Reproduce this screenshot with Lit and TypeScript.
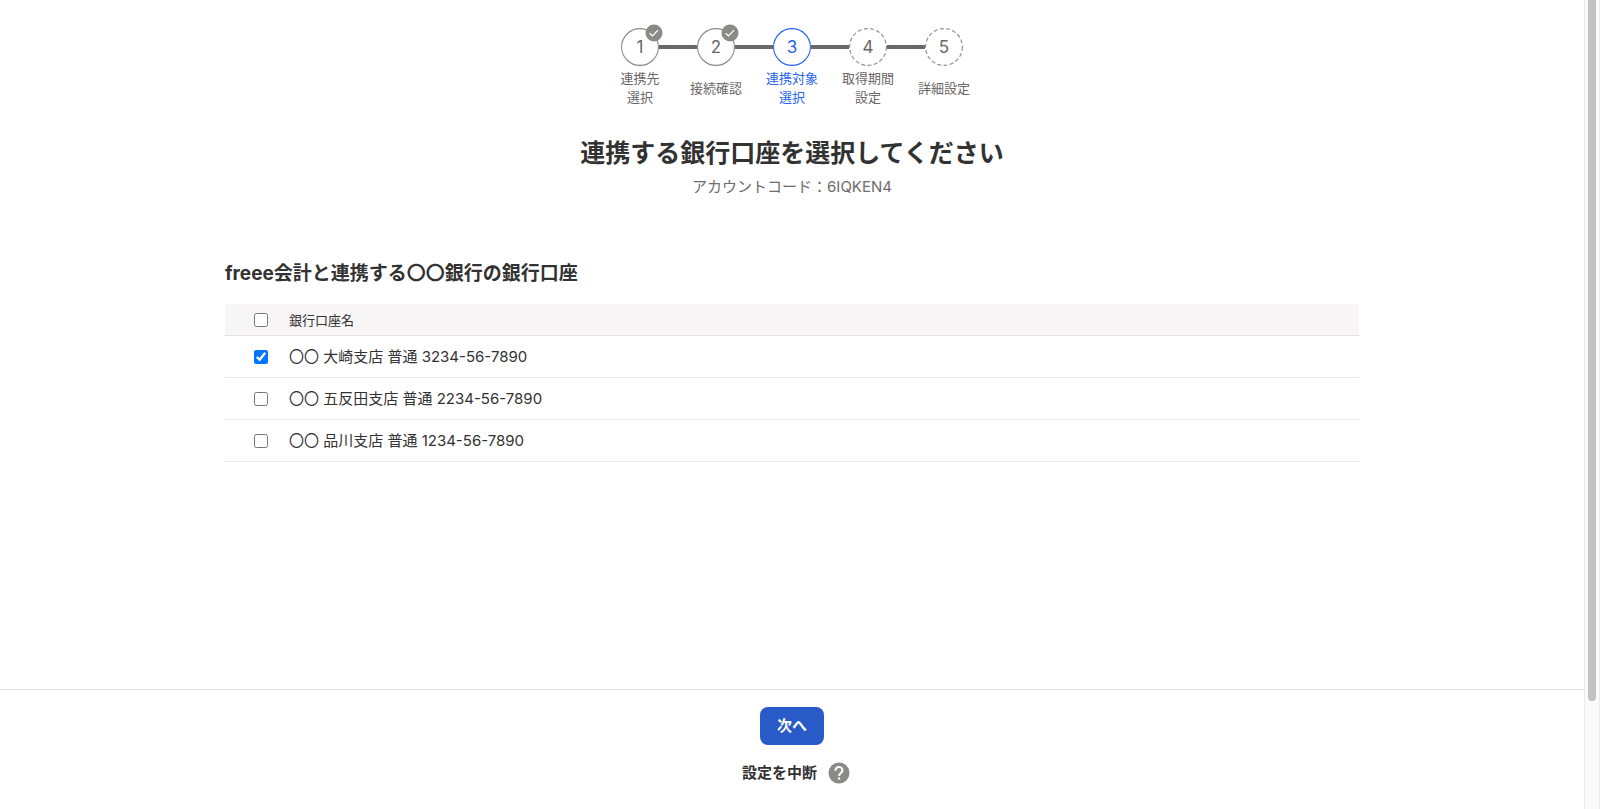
import { LitElement, html, css, nothing } from "lit";
import { customElement, property, state } from "lit/decorators.js";
import { classMap } from "lit/directives/class-map.js";

type StepStatus = "done" | "current" | "todo";

interface Step {
  lines: string[];
  status: StepStatus;
}

interface Account {
  id: string;
  name: string;
  checked: boolean;
}

@customElement("step-progress")
class StepProgress extends LitElement {
  static styles = css`
    :host {
      display: block;
    }
    .steps {
      display: flex;
      justify-content: center;
      margin: 0;
      padding: 0;
      list-style: none;
    }
    .step {
      width: 76px;
      color: #6b6767;
    }
    .rail {
      display: grid;
      grid-template-columns: 1fr 38px 1fr;
      align-items: center;
    }
    .line {
      height: 4px;
      background: #6b6767;
    }
    .step:first-child .line:first-child,
    .step:last-child .line:last-child {
      visibility: hidden;
    }
    .circle {
      position: relative;
      display: grid;
      place-items: center;
      width: 38px;
      height: 38px;
    }
    .ring {
      grid-area: 1 / 1;
      display: block;
      fill: #fff;
      stroke: #8c8989;
      stroke-width: 1.1;
    }
    .todo .ring {
      stroke-dasharray: 4 2.3;
    }
    .number {
      grid-area: 1 / 1;
      z-index: 1;
      font-size: 17px;
      line-height: 20px;
    }
    .badge {
      position: absolute;
      top: -4px;
      right: -4px;
      z-index: 2;
      display: block;
    }
    .label {
      display: flex;
      flex-direction: column;
      align-items: center;
      justify-content: center;
      height: 38px;
      margin-top: 3px;
      font-size: 13px;
      line-height: 19px;
      white-space: nowrap;
    }
    .current {
      color: #2864f0;
    }
    .current .ring {
      stroke: #2864f0;
    }
  `;

  @property({ attribute: false }) steps: Step[] = [];

  private badge() {
    return html`<svg class="badge" width="18" height="18" viewBox="0 0 18 18" aria-hidden="true">
      <circle cx="9" cy="9" r="8.5" fill="#8c8989" />
      <path d="M4.6 9.2l2.8 2.7 5.7-5.8" fill="none" stroke="#fff" stroke-width="1.3" />
    </svg>`;
  }

  render() {
    return html`<ol class="steps">
      ${this.steps.map(
        (step, i) => html`<li
          class=${classMap({ step: true, [step.status]: true })}
          aria-current=${step.status === "current" ? "step" : nothing}
        >
          <div class="rail">
            <span class="line"></span>
            <span class="circle">
              <svg class="ring" width="38" height="38" viewBox="0 0 38 38" aria-hidden="true">
                <circle cx="19" cy="19" r="18.4" />
              </svg>
              <span class="number">${i + 1}</span>
              ${step.status === "done" ? this.badge() : nothing}
            </span>
            <span class="line"></span>
          </div>
          <div class="label">${step.lines.map((l) => html`<span>${l}</span>`)}</div>
        </li>`
      )}
    </ol>`;
  }
}

@customElement("account-table")
class AccountTable extends LitElement {
  static styles = css`
    :host {
      display: block;
    }
    .table {
      width: 100%;
      border-collapse: separate;
      border-spacing: 0;
      text-align: left;
    }
    .cell {
      height: 42px;
      box-sizing: border-box;
      padding: 0;
      border-bottom: 1px solid #e9e7e7;
      vertical-align: middle;
      font-size: 15px;
      line-height: 20px;
    }
    .head .cell {
      height: 32px;
      background: #f7f5f5;
      border-color: #e5e3e3;
      font-size: 13px;
      font-weight: 400;
    }
    .check {
      width: 64px;
      padding-left: 29px;
    }
    .box {
      display: block;
      width: 14px;
      height: 14px;
      margin: 0;
      accent-color: #0075ff;
    }
  `;

  @property({ attribute: false }) accounts: Account[] = [];

  private toggle(id: string, checked: boolean) {
    this.dispatchEvent(new CustomEvent("toggle-account", { detail: { id, checked } }));
  }

  private toggleAll(e: Event) {
    const checked = (e.target as HTMLInputElement).checked;
    this.accounts.forEach((a) => this.toggle(a.id, checked));
  }

  render() {
    return html`<table class="table">
      <thead>
        <tr class="head">
          <th class="cell check">
            <input
              class="box"
              id="all"
              type="checkbox"
              .checked=${this.accounts.every((a) => a.checked)}
              @change=${this.toggleAll}
            />
          </th>
          <th class="cell" scope="col"><label for="all">銀行口座名</label></th>
        </tr>
      </thead>
      <tbody>
        ${this.accounts.map(
          (a) => html`<tr>
            <td class="cell check">
              <input
                class="box"
                id=${a.id}
                type="checkbox"
                .checked=${a.checked}
                @change=${(e: Event) => this.toggle(a.id, (e.target as HTMLInputElement).checked)}
              />
            </td>
            <td class="cell"><label for=${a.id}>${a.name}</label></td>
          </tr>`
        )}
      </tbody>
    </table>`;
  }
}

@customElement("app-root")
class AppRoot extends LitElement {
  static styles = css`
    :host {
      display: flex;
      height: 100vh;
      overflow: hidden;
      background: #fff;
      color: #323232;
      font-family: Inter, "Noto Sans CJK JP", sans-serif;
    }
    .page {
      flex: 1;
      min-width: 0;
      display: flex;
      flex-direction: column;
    }
    .main {
      flex: 1;
      min-height: 0;
      padding: 28px 24px 0;
    }
    .title {
      margin: 27px 0 0;
      font-size: 25px;
      line-height: 38px;
      font-weight: 700;
      text-align: center;
    }
    .code {
      margin: 4px 0 0;
      font-size: 15px;
      line-height: 22px;
      text-align: center;
      color: #6e6b6b;
    }
    .accounts {
      max-width: 1134px;
      margin: 62px auto 0;
    }
    .heading {
      margin: 0 0 16px;
      font-size: 19px;
      line-height: 28px;
      font-weight: 700;
    }
    .footer {
      display: flex;
      flex-direction: column;
      align-items: center;
      padding: 17px 0 25px;
      border-top: 1px solid #e1e5e5;
    }
    .next {
      height: 38px;
      padding: 0 17px;
      border: 0;
      border-radius: 8px;
      background: #285ac8;
      color: #fff;
      font: 700 15px/20px Inter, "Noto Sans CJK JP", sans-serif;
    }
    .pause-row {
      display: flex;
      align-items: center;
      gap: 11px;
      margin-top: 17px;
      padding-left: 8px;
    }
    .pause,
    .help {
      padding: 0;
      border: 0;
      background: none;
      color: inherit;
    }
    .pause {
      font: 700 15px/22px Inter, "Noto Sans CJK JP", sans-serif;
    }
    .help,
    .help-icon {
      display: block;
    }
    .scrollbar {
      display: flex;
      justify-content: center;
      width: 16px;
      box-sizing: border-box;
      border-left: 1px solid #e8e8e8;
      border-right: 1px solid #ededed;
      background: #fafafa;
    }
    .thumb {
      width: 8px;
      height: calc(100% - 108px);
      border-radius: 0 0 4px 4px;
      background: #c1c1c1;
    }
  `;

  @state() private accounts: Account[] = [
    { id: "osaki", name: "〇〇 大崎支店 普通 3234-56-7890", checked: true },
    { id: "gotanda", name: "〇〇 五反田支店 普通 2234-56-7890", checked: false },
    { id: "shinagawa", name: "〇〇 品川支店 普通 1234-56-7890", checked: false },
  ];

  private steps: Step[] = [
    { lines: ["連携先", "選択"], status: "done" },
    { lines: ["接続確認"], status: "done" },
    { lines: ["連携対象", "選択"], status: "current" },
    { lines: ["取得期間", "設定"], status: "todo" },
    { lines: ["詳細設定"], status: "todo" },
  ];

  private onToggle(e: CustomEvent<{ id: string; checked: boolean }>) {
    const { id, checked } = e.detail;
    this.accounts = this.accounts.map((a) => (a.id === id ? { ...a, checked } : a));
  }

  render() {
    return html`
      <div class="page">
        <main class="main">
          <step-progress .steps=${this.steps}></step-progress>
          <h1 class="title">連携する銀行口座を選択してください</h1>
          <p class="code">アカウントコード：6IQKEN4</p>
          <section class="accounts">
            <h2 class="heading">freee会計と連携する〇〇銀行の銀行口座</h2>
            <account-table .accounts=${this.accounts} @toggle-account=${this.onToggle}></account-table>
          </section>
        </main>
        <footer class="footer">
          <button class="next" type="button">次へ</button>
          <div class="pause-row">
            <button class="pause" type="button">設定を中断</button>
            <button class="help" type="button" aria-label="ヘルプ">
              <svg class="help-icon" width="22" height="22" viewBox="0 0 22 22" aria-hidden="true">
                <circle cx="11" cy="11" r="10.5" fill="#8c8989" />
                <path
                  d="M7.5 8.7C7.5 6.4 9 5 11 5s3.5 1.3 3.5 3.3c0 2.6-3.4 2.8-3.4 5.6"
                  fill="none"
                  stroke="#fff"
                  stroke-width="2.1"
                />
                <rect x="10" y="15.4" width="2.2" height="2.2" fill="#fff" />
              </svg>
            </button>
          </div>
        </footer>
      </div>
      <div class="scrollbar" aria-hidden="true"><div class="thumb"></div></div>
    `;
  }
}
